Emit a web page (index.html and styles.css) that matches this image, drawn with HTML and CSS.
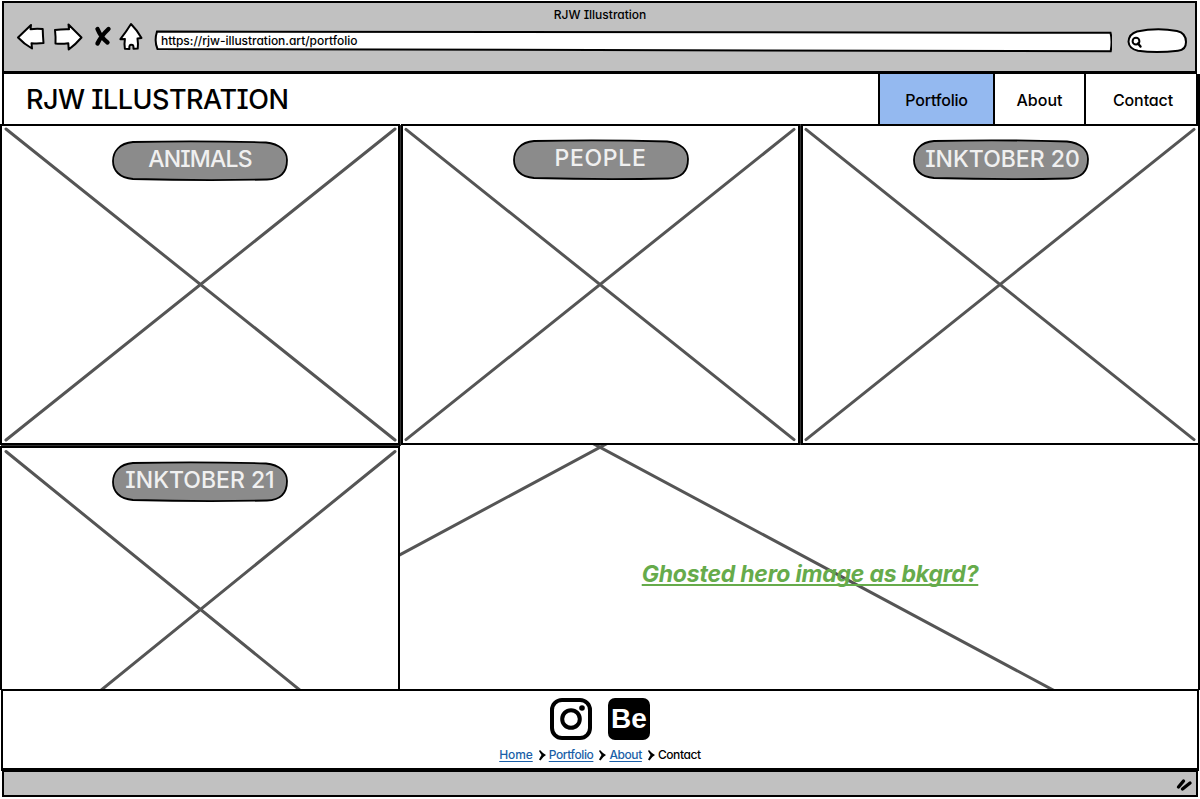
FILE: index.html
```html
<!DOCTYPE html>
<html lang="en">
<head>
<meta charset="utf-8">
<title>RJW Illustration</title>
<link rel="stylesheet" href="styles.css">
</head>
<body>
<div class="window">
  <header class="chrome">
    <div class="chrome-title"><span>RJW Illustration</span></div>
    <div class="toolbar">
      <svg class="controls" width="130" height="32" viewBox="14 22 130 32">
        <g fill="#fff" stroke="#000" stroke-width="2" stroke-linejoin="round">
          <path d="M18 37.500 31 25l-.5 4.200q6-1 12.200-.2.200 7 .8 14-6 .8-12 .2l.5 5.300Q24 44 18 37.500z"/>
          <path d="M81.500 37.500 68.500 24.500l.5 4.800q-7-.2-14 .7.800 6.500.5 13.500 6 .6 12.800-.3l.4 6.300Q76 44 81.500 37.500z"/>
          <path d="M131 24q6 6 10.500 14l-4 .6q.8 5 .2 10l-4.200.2q.2-3.300-1-3.800-2-.8-2.800.5-.6 1-.3 3.600l-4.500-.3q-.8-5 0-9.800l-4.500.2Q126 32 131 24z"/>
        </g>
        <path d="M97.500 29Q101 37.500 107.500 42.500M108.500 29Q101 36 97.500 43.500" fill="none" stroke="#000" stroke-width="4.400" stroke-linecap="round"/>
      </svg>
      <div class="address">
        <svg class="sketch" width="958" height="24" viewBox="154 29 958 24" aria-hidden="true"><path d="M157 31.500Q600 32 1110.500 32.800q2 8 .2 18.500Q600 50.500 157.500 49q-3.500-8-.5-17.500z"/></svg>
        <span>https://rjw-illustration.art/portfolio</span>
      </div>
      <svg class="search" width="62" height="28" viewBox="1126 27 62 28">
        <path d="M1137 31.500q20-4 40-.5 9 2 9 11 0 8-8 8.800-22 2.500-40 0-9-2-9.500-9 .5-8 8.500-10.300z" fill="#fff" stroke="#000" stroke-width="2"/>
        <circle cx="1136" cy="41.200" r="3.400" fill="#fff" stroke="#000" stroke-width="2"/><path d="m1138 43.500 2.500 3" stroke="#000" stroke-width="2.400" stroke-linecap="round"/>
      </svg>
    </div>
  </header>
  <div class="masthead">
    <h1 class="brand">RJW ILLUSTRATION</h1>
    <nav class="nav">
      <a class="nav-item nav-portfolio active"><span>Portfolio</span></a>
      <a class="nav-item nav-about"><span>About</span></a>
      <a class="nav-item nav-contact"><span>Contact</span></a>
    </nav>
  </div>
  <main class="gallery">
    <section class="card animals">
      <svg class="cross" viewBox="0 0 400 321"><path d="m6 5 389 311M395 5 6 316"/></svg>
      <svg class="pill" width="178" height="42" viewBox="0 0 178 42"><path d="M22 2Q90 .5 155 2.500C169 4 176 11 176 20c0 11-5 19-20 19.500Q90 40.800 22 39C8 38 2 30 2 21S8 3 22 2z"/></svg>
      <h2 class="label"><span>ANIMALS</span></h2>
    </section>
    <section class="card people">
      <svg class="cross" viewBox="0 0 400 321"><path d="m5 5 389 311M394 5 5 316"/></svg>
      <svg class="pill" width="178" height="42" viewBox="0 0 178 42"><path d="M22 2Q90 .5 155 2.500C169 4 176 11 176 20c0 11-5 19-20 19.500Q90 40.800 22 39C8 38 2 30 2 21S8 3 22 2z"/></svg>
      <h2 class="label"><span>PEOPLE</span></h2>
    </section>
    <section class="card ink20">
      <svg class="cross" viewBox="0 0 400 321"><path d="m5 5 389 311M394 5 5 316"/></svg>
      <svg class="pill" width="178" height="42" viewBox="0 0 178 42"><path d="M22 2Q90 .5 155 2.500C169 4 176 11 176 20c0 11-5 19-20 19.500Q90 40.800 22 39C8 38 2 30 2 21S8 3 22 2z"/></svg>
      <h2 class="label"><span>INKTOBER 20</span></h2>
    </section>
    <section class="card ink21">
      <svg class="cross" viewBox="0 0 400 245"><path d="m6 5 303 246M395 5 92 251"/></svg>
      <svg class="pill" width="178" height="42" viewBox="0 0 178 42"><path d="M22 2Q90 .5 155 2.500C169 4 176 11 176 20c0 11-5 19-20 19.500Q90 40.800 22 39C8 38 2 30 2 21S8 3 22 2z"/></svg>
      <h2 class="label"><span>INKTOBER 21</span></h2>
    </section>
    <section class="hero">
      <svg class="cross" viewBox="400 445 798 245"><path d="m392 559 216-116M592 443l476 255"/></svg>
      <p class="note"><span>Ghosted hero image as bkgrd?</span></p>
    </section>
  </main>
  <footer class="footer">
    <div class="social">
      <svg width="42" height="42" viewBox="0 0 42 42"><rect x="2" y="2" width="38" height="38" rx="10" fill="#fff" stroke="#000" stroke-width="4"/><circle cx="21" cy="21" r="8.800" fill="none" stroke="#000" stroke-width="4"/><circle cx="32" cy="10" r="2.800"/></svg>
      <div class="behance"><span>Be</span></div>
    </div>
    <div class="crumbs">
      <a class="c1"><span>Home</span></a>
      <svg width="7" height="12" viewBox="0 0 7 12"><path d="M1 1q2.500 3 6 5Q3.500 8 1.500 11.500L0 10.500 2.500 6 0 2z"/></svg>
      <a class="c2"><span>Portfolio</span></a>
      <svg width="7" height="12" viewBox="0 0 7 12"><path d="M1 1q2.500 3 6 5Q3.500 8 1.500 11.500L0 10.500 2.500 6 0 2z"/></svg>
      <a class="c3"><span>About</span></a>
      <svg width="7" height="12" viewBox="0 0 7 12"><path d="M1 1q2.500 3 6 5Q3.500 8 1.500 11.500L0 10.500 2.500 6 0 2z"/></svg>
      <span class="c4">Contact</span>
    </div>
  </footer>
  <div class="statusbar">
    <svg width="20" height="16" viewBox="0 0 20 16"><path d="m3.500 11 5-6M7.500 13l7.500-6" stroke="#000" stroke-width="3.400" stroke-linecap="round"/></svg>
  </div>
</div>
</body>
</html>
```
FILE: styles.css
```css
* { box-sizing: border-box; }
body {
  margin: 0;
  background: #fff;
  color: #000;
  font-family: Inter, Lato, sans-serif;
  font-feature-settings: "cv11", "cv08", "ss03";
  font-weight: 500;
  overflow: hidden;
}
h1, h2, p { margin: 0; }
svg { display: block; flex: none; }
.window { width: 1200px; height: 799px; display: flex; flex-direction: column; padding-top: 1px; }

.chrome {
  height: 73px;
  margin: 0 3px 0 2px;
  border: 2px solid #000;
  border-bottom-width: 3px;
  background: #c1c1c1;
}
.chrome-title { height: 23px; padding-left: 1px; text-align: center; font-size: 12px; line-height: 23px; }
.toolbar { display: flex; align-items: flex-start; padding-left: 10px; }
.controls { margin-top: -4px; }
.address { position: relative; width: 958px; height: 24px; margin: 3px 0 0 10px; padding-left: 7px; font-size: 12px; line-height: 24px; letter-spacing: -0.03px; }
.address span { position: relative; }
.sketch { position: absolute; left: 0; top: 0; fill: #fff; stroke: #000; stroke-width: 2; }
.search { margin: 1px 0 0 14px; }

.masthead { display: flex; justify-content: space-between; height: 50px; margin: 0 0 0 2px; border-left: 2px solid #000; border-right: 4px solid #000; }
.brand { padding-left: 22px; font-size: 27px; font-weight: 500; line-height: 52px; letter-spacing: -0.5px; white-space: nowrap; }
.nav { display: flex; }
.nav-item { display: flex; align-items: center; justify-content: center; border-left: 2px solid #000; font-size: 16px; padding-top: 2px; letter-spacing: -0.2px; }
.nav-portfolio { width: 115px; }
.nav-about { width: 91px; letter-spacing: 0; }
.nav-contact { width: 112px; padding-left: 4px; letter-spacing: -0.1px; }
.active { background: #94b9f0; }

.gallery { display: grid; grid-template-columns: 400px 400px 399px; grid-template-rows: 321px 245px; height: 566px; padding-left: 1px; }
.card { position: relative; border: 2px solid #000; display: flex; flex-direction: column; align-items: center; }
.card { margin-right: 1px; }
.animals { margin-left: -1px; box-shadow: 1px 1px 0 #333; }
.people { box-shadow: 1px 0 0 #333; }
.ink20 { margin-right: 0; }
.ink21 { margin: 1px 1px 0 -1px; border-bottom: 0; }
.cross { position: absolute; inset: -2px; width: calc(100% + 4px); height: calc(100% + 4px); fill: none; stroke: #555; stroke-width: 3; stroke-linecap: round; overflow: hidden; }
.pill { position: relative; margin-top: 13px; fill: #8b8b8b; stroke: #000; stroke-width: 1.800; }
.animals .pill { margin-top: 14px; }
.label { position: relative; margin-top: -42px; height: 42px; font-size: 23px; font-weight: 500; line-height: 38px; color: #f0f0f0; white-space: nowrap; }
.animals .label { letter-spacing: -0.8px; }
.people .label { letter-spacing: 0.7px; }
.ink20 .label { line-height: 41px; padding-left: 4px; }
.hero { position: relative; border-right: 2px solid #000; border-left: 1px solid #000; margin-left: -2px; grid-column: 2 / 4; display: flex; justify-content: center; padding-top: 113px; }
.hero .cross { inset: 0; width: 100%; height: 100%; }
.note { position: relative; height: 34px; padding-left: 22px; color: #66ab4b; font-size: 23px; font-style: italic; font-weight: 700; line-height: 33px; letter-spacing: -0.22px; white-space: nowrap; }
.note span { text-decoration: underline; text-decoration-thickness: 2px; text-underline-offset: 2px; text-decoration-skip-ink: none; }

.footer { height: 82px; border: 2px solid #000; border-bottom-width: 3px; margin: -1px 1px 0; padding-top: 7px; display: flex; flex-direction: column; align-items: center; background: #fff; position: relative; }
.social { display: flex; gap: 16px; }
.behance { width: 42px; height: 42px; border-radius: 7px; background: #000; color: #fff; display: flex; align-items: center; justify-content: center; font: bold 28px/42px "Liberation Sans", sans-serif; }
.crumbs { display: flex; align-items: center; margin-top: 5px; font-size: 12px; line-height: 19px; letter-spacing: -0.4px; white-space: nowrap; }
.crumbs a { color: #1a5fa8; text-decoration: underline; text-underline-offset: 2px; text-decoration-skip-ink: none; }
.crumbs .c1 { letter-spacing: -0.1px; }
.crumbs svg { margin: 0 3px 0 6px; }
.statusbar { height: 26px; margin: 0 2px; border: 2px solid #000; border-top: 1px solid #000; background: #c1c1c1; display: flex; justify-content: flex-end; padding: 4px 1px 0 0; }
```
